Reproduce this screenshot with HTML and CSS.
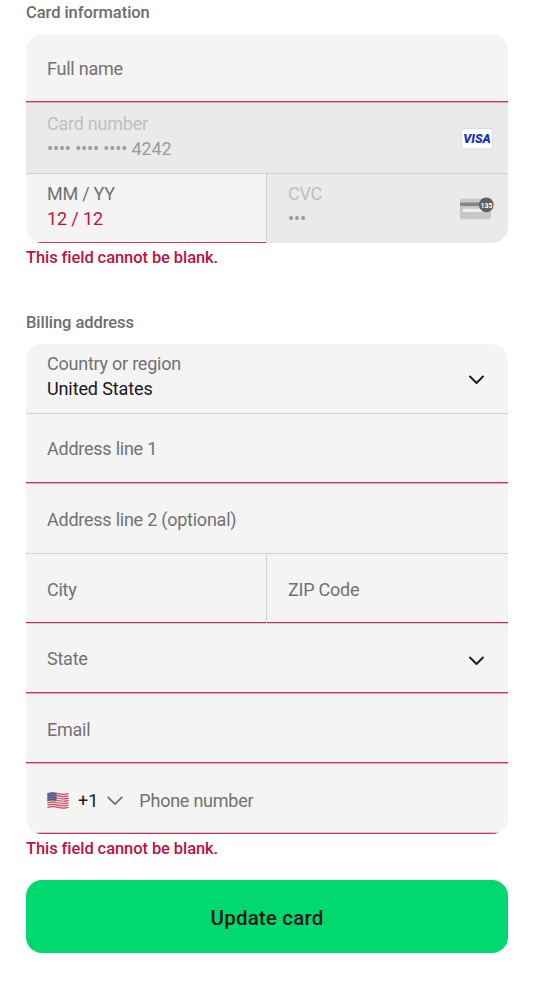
FILE: index.html
```html
<!DOCTYPE html>
<html lang="en">
<head>
<meta charset="utf-8">
<title>Update card</title>
<link rel="stylesheet" href="styles.css">
</head>
<body>
<main class="form">
  <h2 class="heading">Card information</h2>
  <section class="group card-group">
    <div class="row row-name error"><span class="label">Full name</span></div>
    <div class="row row-number disabled">
      <div class="stack"><span class="label">Card number</span><span class="value"><span class="dots">•••• •••• ••••</span> 4242</span></div>
      <svg class="brand" width="32" height="22" viewBox="0 0 32 22"><rect x=".5" y=".5" width="31" height="20.5" rx="2.5" fill="#fff" stroke="#ddd"/><text class="visa" x="2.3" y="15" textLength="27.500" lengthAdjust="spacingAndGlyphs">VISA</text></svg>
    </div>
    <div class="row row-expiry split">
      <div class="cell expiry"><div class="stack"><span class="label">MM / YY</span><span class="value">12 / 12</span></div></div>
      <div class="cell cvc disabled">
        <div class="stack"><span class="label">CVC</span><span class="value dots">•••</span></div>
        <svg class="cvc-icon" width="35" height="23" viewBox="0 0 35 23"><rect y="1.8" width="31" height="20.5" rx="2" fill="#c7c7c7"/><rect y="5.5" width="31" height="3.5" fill="#858585"/><rect x="2.5" y="11.8" width="26" height="3.2" rx=".7" fill="#ededed"/><circle cx="26.3" cy="7.8" r="7.4" fill="#606060"/><text class="digits" x="20.4" y="10.7" textLength="12" lengthAdjust="spacingAndGlyphs">135</text></svg>
      </div>
    </div>
  </section>
  <p class="message">This field cannot be blank.</p>

  <h2 class="heading billing">Billing address</h2>
  <section class="group billing-group">
    <div class="row row-country">
      <div class="stack"><span class="label">Country or region</span><span class="value">United States</span></div>
      <svg class="chevron" width="16" height="10" viewBox="0 0 16 10"><path d="M2 1.500 8.500 8l6.500-6.500"/></svg>
    </div>
    <div class="row row-line1 error"><span class="label">Address line 1</span></div>
    <div class="row row-line2"><span class="label">Address line 2 (optional)</span></div>
    <div class="row row-city split">
      <div class="cell city"><span class="label">City</span></div>
      <div class="cell zip"><span class="label">ZIP Code</span></div>
    </div>
    <div class="row row-state error"><span class="label">State</span>
      <svg class="chevron" width="16" height="10" viewBox="0 0 16 10"><path d="M2 1.500 8.500 8l6.500-6.500"/></svg>
    </div>
    <div class="row row-email error"><span class="label">Email</span></div>
    <div class="row row-phone">
      <svg class="flag" width="22" height="17" viewBox="0 0 22 17">
        <path d="M.4 1.300Q5.500-.3 11 1.200T21.600 1v14.500q-5 1.300-10.600.2T.4 15.800z" fill="#eee6e7"/>
        <g fill="none" stroke="#c6505e" stroke-width="1.150"><path d="M.4 1.700Q5.500.1 11 1.600t10.600-.1M.4 4Q5.500 2.400 11 3.900t10.600-.1M.4 6.300q5.100-1.600 10.600-.1t10.600-.1M.4 8.600Q5.500 7 11 8.500t10.600-.1M.4 10.900q5.100-1.600 10.600-.1t10.600-.1M.4 13.200q5.100-1.600 10.600-.1t10.600-.1M.4 15.500q5.100-1.600 10.600-.1t10.600-.1"/></g>
        <path d="M.4 1.200Q5 0 9.500.9v8Q5 8.100.4 9z" fill="#555a91"/>
        <path d="M1.500 2.500h7M2 4.500h7M1.500 6.500h7" stroke="#a7a8c5" stroke-width=".6" stroke-dasharray=".8 1"/>
      </svg>
      <span class="code">+1</span>
      <svg class="chevron muted" width="16" height="10" viewBox="0 0 16 10"><path d="M1.200 1.300 8 8.100l6.800-6.800"/></svg>
      <span class="label phone">Phone number</span>
    </div>
  </section>
  <p class="message phone-message">This field cannot be blank.</p>
  <button class="submit" type="button">Update card</button>
</main>
</body>
</html>
```

FILE: styles.css
```css
* { box-sizing: border-box; }
body { margin: 0; background: #fff; color: #191919; font-family: Roboto, "Liberation Sans", sans-serif; font-size: 18px; }
.form { width: 534px; padding: 0 26px; }
.heading { margin: 0; height: 34px; padding-top: 2px; font-size: 16.5px; line-height: 22px; font-weight: 500; letter-spacing: -0.06px; color: #6d6d6d; }
.group { overflow: hidden; border-radius: 16px; background: #f4f4f4; }
.row { display: flex; align-items: center; justify-content: space-between; padding: 0 16px 0 21px; border-bottom: 1px solid #d2d2d2; }
.row.split { padding: 0; align-items: stretch; }
.cell { width: 241px; display: flex; align-items: center; justify-content: space-between; padding: 0 13px 0 21px; }
.cell:first-child { border-right: 1px solid #d2d2d2; }
.stack { display: flex; flex-direction: column; }
.label { color: #727272; line-height: 24px; letter-spacing: -0.24px; }
.value { line-height: 26px; letter-spacing: -0.12px; color: #191919; }
.error { border-bottom: 1px solid #d9a9b4; box-shadow: inset 0 -1px #cc365a; }
.disabled { background: #eaeaea; }
.disabled .label { color: #bfbfbf; }
.disabled .value { color: #9b9b9b; }

.row-name { height: 69px; padding-top: 1px; }
.row-number { height: 71px; }
.row-expiry { height: 69px; border-bottom: 0; }
.row-number .stack { padding-bottom: 2px; }
.expiry .stack, .cvc .stack { padding-bottom: 3px; }
.expiry { box-shadow: inset 0 -1px #cf345a; }
.expiry .value { color: #c0123c; }
.brand { margin: 1px -1px 0 0; }
.visa { font: italic 900 12px Roboto, sans-serif; fill: #1730c8; }
.digits { font: 700 8px Roboto, sans-serif; fill: #fff; }

.message { margin: 0; height: 67px; padding-top: 4px; line-height: 22px; font-size: 16.5px; font-weight: 500; letter-spacing: -0.08px; color: #c0123c; }
.billing { height: 34px; }
.row-country { height: 70px; }
.row-country .stack { padding-bottom: 3px; }
.row-country .chevron { margin-top: 2px; }
.row-line1 { height: 70px; padding-top: 1px; }
.row-line2 { height: 70px; padding-top: 2px; }
.row-city { height: 70px; }
.row-city .cell { padding-top: 2px; box-shadow: inset 0 -1px #d51f4b; }
.row-state { height: 70px; }
.row-state .chevron { margin-top: 4px; }
.row-email { height: 70px; padding-top: 3px; }
.row-phone { height: 70px; border-bottom: 0; box-shadow: inset 0 -1px #c93259, inset 0 -2px #e9b9c5; padding-top: 3px; justify-content: flex-start; }
.chevron { margin: 0 8px 0 0; fill: none; stroke: #191919; stroke-width: 1.9; stroke-linecap: round; stroke-linejoin: round; }
.chevron.muted { stroke: #727272; margin: 0 0 0 9px; }
.code { margin-left: 9px; line-height: 24px; }
.phone { margin-left: 16px; }
.phone-message { height: 46px; }
.submit { display: flex; align-items: center; justify-content: center; width: 100%; height: 73px; padding: 2px 0 0; border: 0; border-radius: 16px; background: #00d870; color: #191919; font: 500 20.500px Roboto, sans-serif; letter-spacing: 0.18px; }
```
